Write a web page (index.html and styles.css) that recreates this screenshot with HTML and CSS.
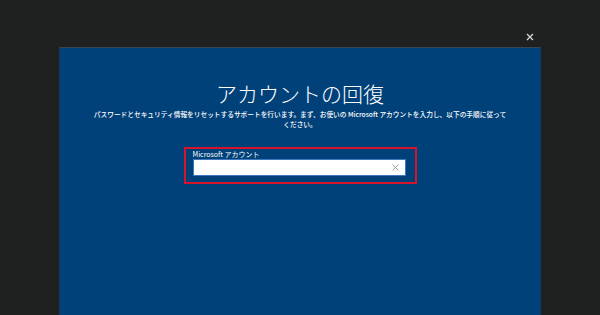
FILE: index.html
```html
<!DOCTYPE html>
<html lang="ja">
<head>
    <meta charset="UTF-8">
    <meta name="viewport" content="width=device-width, initial-scale=1.0">
    <title>アカウントの回復</title>

    <link rel="stylesheet" href="styles.css">
</head>
<body>
        <!-- top bar with close button -->
        <div class="topbar">
            <button class="close" aria-label="閉じる">
                <svg width="8" height="8" viewBox="0 0 8 8">
                    <path d="M1 1 L7 7 M7 1 L1 7" stroke="#d6d6d6" stroke-width="1.3" fill="none"/>
                </svg>
            </button>
        </div>

        <div class="panel">
            <h1 class="title">アカウントの回復</h1>
            <p class="intro">パスワードとセキュリティ情報をリセットするサポートを行います。まず、お使いの Microsoft アカウントを入力し、以下の手順に従ってください。</p>

            <div class="field">
                <label class="label" for="account">Microsoft アカウント</label>
                <div class="input">
                    <input type="text" id="account">
                    <span class="clear">
                        <svg width="7" height="7" viewBox="0 0 7 7">
                            <path d="M0.5 0.5 L6.5 6.5 M6.5 0.5 L0.5 6.5" stroke="#8a8a8a" stroke-width="0.8" fill="none"/>
                        </svg>
                    </span>
                </div>
            </div>
        </div>
</body>
</html>
```

FILE: styles.css
```css
*{
    margin: 0;
    padding: 0;
    box-sizing: border-box
}

body{
    height: 315px;
    overflow: hidden;
    background-color: #1f2020;
    font-family: "Noto Sans CJK JP", "Noto Sans", sans-serif;
    color: white;
}

.topbar{
    height: 47px;
    display: flex;
    justify-content: flex-end;
    align-items: flex-start;
    padding: 33px 66px 0 0;
}

.close{
    width: 8px;
    height: 8px;
    border: none;
    background: none;
    display: flex;
}

.panel{
    margin: 0 59px;
    height: 268px;
    background-color: #014179;
    border-top: 1px solid #3b4653;
    border-left: 1px solid #0a3a68;
    border-right: 1px solid #0a3a68;
    text-align: center;
    padding-top: 35px;
}

.title{
    font-size: 21px;
    line-height: 21px;
    font-weight: 300;
}

.intro{
    width: 418px;
    margin: 5px auto 0;
    font-size: 6.7px;
    line-height: 10px;
    font-weight: 500;
}

.field{
    width: 233px;
    margin: 18px auto 0;
    border: 2px solid #d8142c;
    padding: 0 9px 6px 7px;
    text-align: left;
}

.label{
    display: block;
    font-size: 7px;
    line-height: 10px;
}

.input{
    height: 17px;
    background-color: white;
    border: 1px solid #3d78bd;
    display: flex;
    align-items: center;
    padding-right: 6px;
}

.input input{
    flex: 1;
    min-width: 0;
    height: 100%;
    border: none;
    outline: none;
    background: none;
}

.clear{
    display: flex;
}
```
